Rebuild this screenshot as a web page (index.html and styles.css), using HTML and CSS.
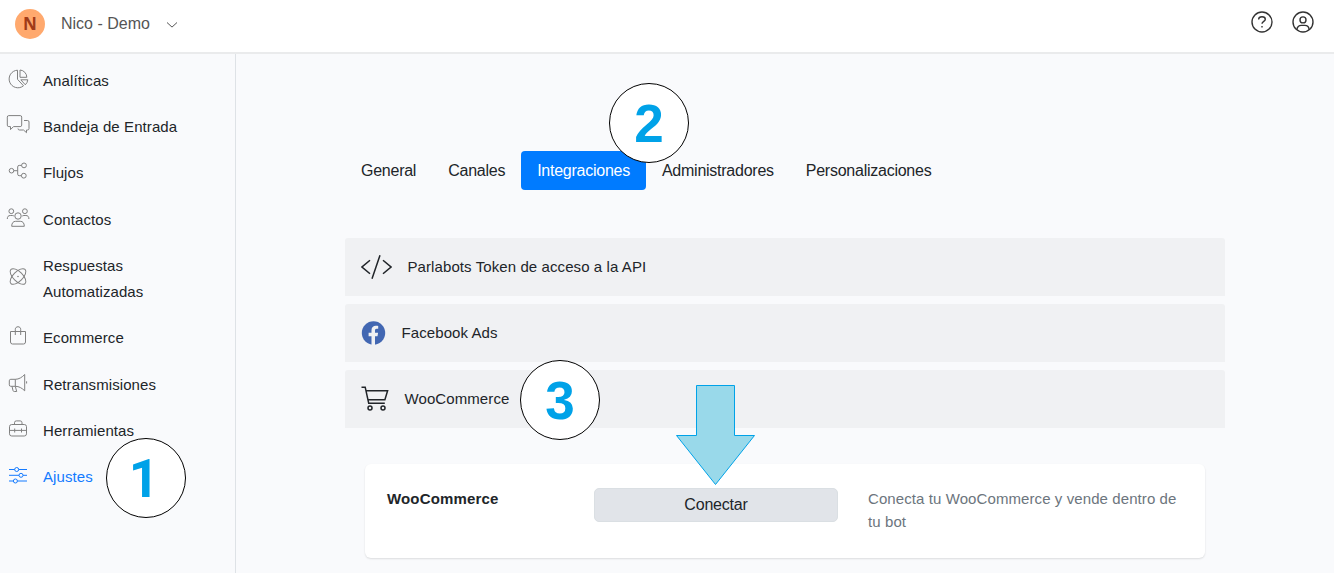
FILE: index.html
```html
<!DOCTYPE html>
<html lang="es">
<head>
    <meta charset="UTF-8">
    <meta name="viewport" content="width=device-width, initial-scale=1.0">
    <title>Ajustes - Integraciones</title>
    <link rel="stylesheet" href="styles.css">
</head>
<body>
    <header class="topbar">
        <div class="avatar">N</div>
        <span class="account-name">Nico - Demo</span>
        <svg class="chevron" width="12" height="8" viewBox="0 0 12 8"><path d="M1 1.5l5 4.6 5-4.6"></path></svg>
        <div class="topbar-actions">
            <svg width="24" height="24" viewBox="0 0 24 24">
                <circle cx="12" cy="12" r="10"></circle>
                <path d="M8.7 9.6V8.9c0-1.4 1.3-2.2 3.3-2.2s3.3.9 3.3 2.5c0 2.2-3.3 2.1-3.3 4.6M12 16v1.4"></path>
            </svg>
            <svg width="24" height="24" viewBox="0 0 24 24">
                <circle cx="12" cy="12" r="10"></circle>
                <circle cx="12" cy="9.9" r="3"></circle>
                <path d="M6 19.6c0-2.8 2-4.2 4.2-4.2h3.6c2.2 0 4.2 1.4 4.2 4.2"></path>
            </svg>
        </div>
    </header>

    <div class="layout">
        <nav class="sidebar">
            <a class="nav-item">
                <svg width="24" height="24" viewBox="0 0 24 24">
                    <path d="M11.5 3.2A8.800 8.800 0 1 0 17.5 18.800L11.5 12.300z"></path>
                    <path d="M14 3v7.300h6.800A7.300 7.300 0 0 0 14 3z"></path>
                    <path d="M14.800 12.800h7a8 8 0 0 1-2.500 5z"></path>
                </svg>
                <span>Analíticas</span>
            </a>
            <a class="nav-item">
                <svg width="24" height="24" viewBox="0 0 24 24">
                    <path d="M2.800 2.600h11.400q1.500 0 1.500 1.500v8q0 1.500-1.500 1.500H7.500l-3 3v-3H2.800q-1.500 0-1.500-1.500v-8q0-1.500 1.500-1.500z"></path>
                    <path d="M18 7.500h3.500q1.500 0 1.500 1.500v6.500q0 1.500-1.500 1.500h-1v2.700L17.500 17h-4q-1.500 0-1.500-1.500"></path>
                </svg>
                <span>Bandeja de Entrada</span>
            </a>
            <a class="nav-item">
                <svg width="24" height="24" viewBox="0 0 24 24">
                    <circle cx="5.500" cy="11.700" r="2.300"></circle>
                    <circle cx="18" cy="6.400" r="2.400"></circle>
                    <circle cx="17.800" cy="16.700" r="2.400"></circle>
                    <path d="M7.800 11.700h3.900M15.600 6.400h-2.400q-1.500 0-1.500 1.500v7.300q0 1.500 1.500 1.500h2.200"></path>
                </svg>
                <span>Flujos</span>
            </a>
            <a class="nav-item">
                <svg width="24" height="24" viewBox="0 0 24 24">
                    <circle cx="12" cy="10" r="3.200"></circle>
                    <circle cx="5.300" cy="5.200" r="2.400"></circle>
                    <circle cx="18.900" cy="5.200" r="2.400"></circle>
                    <path d="M5.700 20.300c0-3.300 1.500-5 4-5h4.600c2.500 0 4 1.700 4 5zM1.300 13c0-2.400 1-3.500 3-3.500h2q1 0 1.600.5M22.900 13c0-2.400-1-3.500-3-3.500h-2q-1 0-1.600.5"></path>
                </svg>
                <span>Contactos</span>
            </a>
            <a class="nav-item">
                <svg width="24" height="24" viewBox="0 0 24 24">
                    <ellipse cx="12" cy="11.500" rx="10" ry="4.800" transform="rotate(45 12 11.500)"></ellipse>
                    <ellipse cx="12" cy="11.500" rx="10" ry="4.800" transform="rotate(-45 12 11.500)"></ellipse>
                    <circle cx="12" cy="11.500" r=".4"></circle>
                </svg>
                <span>Respuestas Automatizadas</span>
            </a>
            <a class="nav-item">
                <svg width="24" height="24" viewBox="0 0 24 24">
                    <path d="M4.500 7.500h15V18q0 2-2 2h-11q-2 0-2-2zM9.300 11V5.300c0-3.400 5.400-3.400 5.400 0V11"></path>
                </svg>
                <span>Ecommerce</span>
            </a>
            <a class="nav-item">
                <svg width="24" height="24" viewBox="0 0 24 24">
                    <path d="M9.300 8.300h-4.500q-1.500 0-1.500 1.500v4q0 1.500 1.500 1.500h4.500zM9.300 8.300c3.700 0 6.700-2 9.400-4.800v16.300c-2.700-2.700-5.700-4.500-9.400-4.500M6 15.300l1 4.200q.3 1 1.300 1h2.400l-1.400-5.200"></path>
                    <path d="M20.600 10.300v2.200"></path>
                </svg>
                <span>Retransmisiones</span>
            </a>
            <a class="nav-item">
                <svg width="24" height="24" viewBox="0 0 24 24">
                    <rect x="3.500" y="7.500" width="17" height="11.500" rx="2.200"></rect>
                    <path d="M8.500 7.500V5.700q0-1.800 1.800-1.800h3.900q1.800 0 1.800 1.800v1.800M3.500 13.400h17M8.700 11.500v4M15.500 11.500v4"></path>
                </svg>
                <span>Herramientas</span>
            </a>
            <a class="nav-item active">
                <svg width="24" height="24" viewBox="0 0 24 24">
                    <circle cx="10.700" cy="6.500" r="2"></circle>
                    <circle cx="15" cy="12.300" r="2"></circle>
                    <circle cx="9.400" cy="18" r="2"></circle>
                    <path d="M3 6.500h5.700M12.700 6.500H21M3 12.300h10M17 12.300h4M3 18h4.400M11.400 18H21"></path>
                </svg>
                <span>Ajustes</span>
            </a>
        </nav>

        <main class="content">
            <div class="tabs">
                <a class="tab">General</a>
                <a class="tab">Canales</a>
                <a class="tab active">Integraciones</a>
                <a class="tab">Administradores</a>
                <a class="tab">Personalizaciones</a>
            </div>

            <div class="accordion">
                <div class="accordion-row">
                    <svg width="31" height="26" viewBox="0 0 31 26">
                        <path d="M9 6.200L1 13l8 6.800M22 6.200l8 6.800-8 6.800M19 1.200l-8 23.600"></path>
                    </svg>
                    <span>Parlabots Token de acceso a la API</span>
                </div>
                <div class="accordion-row">
                    <svg class="facebook" width="25" height="26" viewBox="0 0 25 26">
                        <circle cx="12.500" cy="13" r="11.700"></circle>
                        <path d="M10.500 25v-8.700H7.600v-3.500h2.900v-2.500c0-2.900 1.700-4.500 4.400-4.500 1.100 0 2.300.2 2.300.2v2.800h-1.500c-1.300 0-1.700.8-1.700 1.700v2.300h3.100l-.6 3.500H14V25z"></path>
                    </svg>
                    <span>Facebook Ads</span>
                </div>
                <div class="accordion-row">
                    <svg width="28" height="26" viewBox="0 0 28 26">
                        <path d="M.5 1.200h3.700l3.500 16h16.100M5 4.700h21.600l-2.700 9.100H7"></path>
                        <circle cx="9" cy="22" r="2"></circle>
                        <circle cx="22" cy="22" r="2"></circle>
                    </svg>
                    <span>WooCommerce</span>
                </div>
            </div>

            <section class="card">
                <h3>WooCommerce</h3>
                <button class="connect">Conectar</button>
                <p>Conecta tu WooCommerce y vende dentro de tu bot</p>
            </section>
        </main>
    </div>

    <!-- Tutorial steps -->
    <div class="step step-1">1</div>
    <div class="step step-2">2</div>
    <div class="step step-3">3</div>
    <svg class="arrow" width="80" height="101" viewBox="0 0 80 101">
        <path d="M20.500.5h38v50h20L39.500 99.500.5 50.500h20z"></path>
    </svg>
</body>
</html>
```

FILE: styles.css
```css
* {
    box-sizing: border-box;
}

body {
    margin: 0;
    height: 573px;
    overflow: hidden;
    position: relative;
    background: #f9fafc;
    color: #212529;
    font-family: "Liberation Sans", Arial, sans-serif;
    font-size: 15px;
    letter-spacing: 0.09px;
}

svg {
    fill: none;
    stroke: currentColor;
    flex-shrink: 0;
}

.topbar {
    display: flex;
    align-items: center;
    height: 54px;
    padding: 0 19px 6px 15px;
    background: #fff;
    border-bottom: 2px solid #eaebec;
}

.avatar {
    width: 30px;
    height: 30px;
    margin-top: 2px;
    border-radius: 50%;
    background: #ffa96e;
    color: #a03b18;
    font-family: "Open Sans", sans-serif;
    font-size: 17px;
    font-weight: 700;
    line-height: 29px;
    text-align: center;
}

.account-name {
    margin: 2px 0 0 16px;
    font-size: 16px;
    letter-spacing: 0;
    color: #555;
}

.chevron {
    margin: 3px 0 0 16px;
    color: #555;
}

.topbar-actions {
    display: flex;
    gap: 17px;
    margin: -2px 0 0 auto;
    color: #333;
}

.topbar-actions svg {
    stroke-width: 1.4;
}

.layout {
    display: flex;
    height: 519px;
}

.sidebar {
    width: 236px;
    padding: 13.7px 40px 0 6px;
    border-right: 1px solid #dee2e6;
}

.nav-item {
    display: flex;
    align-items: center;
    margin-bottom: 20.35px;
    line-height: 26px;
}

.nav-item svg {
    margin: -3px 13px 1px 0;
    color: #808080;
}

.nav-item.active,
.nav-item.active svg {
    color: #147aff;
}

.content {
    width: 880px;
    margin: 0 auto;
    padding-top: 97px;
}

.tabs {
    display: flex;
    margin-bottom: 48px;
}

.tab {
    height: 39px;
    padding: 0 16px;
    border-radius: 4px;
    font-size: 16px;
    letter-spacing: -0.25px;
    line-height: 39px;
}

.tab.active {
    background: #007bff;
    color: #fff;
}

.accordion {
    display: flex;
    flex-direction: column;
    gap: 8px;
}

.accordion-row {
    display: flex;
    align-items: center;
    gap: 15.5px;
    height: 58px;
    padding: 0 16px;
    background: #f0f1f3;
    border-radius: 3px 3px 0 0;
}

.accordion-row svg {
    stroke-width: 1.5;
}

.accordion-row span {
    padding-bottom: 2px;
}

.facebook {
    stroke: none;
}

.facebook circle {
    fill: #4267b2;
}

.facebook path {
    fill: #f0f1f3;
}

.card {
    display: grid;
    grid-template-columns: 207px 244px 1fr;
    align-items: start;
    height: 94px;
    margin: 36px 20px 0;
    padding: 24px 22px 0;
    background: #fff;
    border-radius: 6px;
    box-shadow: 0 1px 2px rgba(0, 0, 0, 0.12);
}

.card h3 {
    margin: 0;
    font-size: 15px;
    letter-spacing: 0.15px;
    line-height: 22px;
}

.card p {
    margin: -1px 0 0 30px;
    color: #6c757d;
    line-height: 23px;
}

.connect {
    height: 34px;
    padding: 0;
    border: 1px solid #dadfe3;
    border-radius: 5px;
    background: #e1e4e9;
    color: #212529;
    font-family: inherit;
    font-size: 16px;
    letter-spacing: -0.2px;
}

.step {
    position: absolute;
    width: 80px;
    height: 80px;
    border: 1px solid #000;
    border-radius: 50%;
    background: #fff;
    color: #00a2e8;
    font-size: 53px;
    font-weight: bold;
    line-height: 79px;
    text-align: center;
}

.step-1 {
    left: 106px;
    top: 438px;
    padding-right: 4px;
    font-family: Roboto, sans-serif;
    line-height: 80px;
}

.step-2 {
    left: 609px;
    top: 83px;
}

.step-3 {
    left: 520px;
    top: 360px;
}

.arrow {
    position: absolute;
    left: 676px;
    top: 385px;
    fill: #99d9ea;
    color: #00a2e8;
}
```
